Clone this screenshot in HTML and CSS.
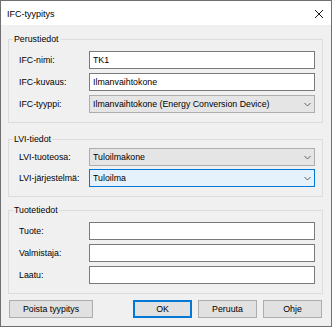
FILE: index.html
```html
<!DOCTYPE html>
<html lang="fi">
<head>
    <meta charset="UTF-8">
    <title>IFC-tyypitys</title>
    <link rel="stylesheet" href="styles.css">
</head>
<body>
    <div class="dialog">
        <div class="titlebar">
            <span class="title">IFC-tyypitys</span>
            <svg class="close" width="10" height="10" viewBox="0 0 10 10">
                <path d="M1 1 L9 9 M9 1 L1 9" stroke="#1a1a1a" stroke-width="1" fill="none"/>
            </svg>
        </div>

        <div class="content">
            <fieldset class="group">
                <legend>Perustiedot</legend>
                <div class="rows">
                    <span class="label">IFC-nimi:</span>
                    <div class="field">TK1</div>
                    <span class="label">IFC-kuvaus:</span>
                    <div class="field">Ilmanvaihtokone</div>
                    <span class="label">IFC-tyyppi:</span>
                    <div class="combo">
                        <span>Ilmanvaihtokone (Energy Conversion Device)</span>
                        <svg class="chevron" width="7" height="5" viewBox="0 0 7 5"><path d="M0.5 1 L3.5 4 L6.5 1" stroke="#606060" fill="none"/></svg>
                    </div>
                </div>
            </fieldset>

            <fieldset class="group lvi">
                <legend>LVI-tiedot</legend>
                <div class="rows tight">
                    <span class="label">LVI-tuoteosa:</span>
                    <div class="combo">
                        <span>Tuloilmakone</span>
                        <svg class="chevron" width="7" height="5" viewBox="0 0 7 5"><path d="M0.5 1 L3.5 4 L6.5 1" stroke="#606060" fill="none"/></svg>
                    </div>
                    <span class="label">LVI-järjestelmä:</span>
                    <div class="combo focused">
                        <span>Tuloilma</span>
                        <svg class="chevron" width="7" height="5" viewBox="0 0 7 5"><path d="M0.5 1 L3.5 4 L6.5 1" stroke="#606060" fill="none"/></svg>
                    </div>
                </div>
            </fieldset>

            <fieldset class="group">
                <legend>Tuotetiedot</legend>
                <div class="rows">
                    <span class="label">Tuote:</span>
                    <div class="field"></div>
                    <span class="label">Valmistaja:</span>
                    <div class="field"></div>
                    <span class="label">Laatu:</span>
                    <div class="field"></div>
                </div>
            </fieldset>

            <div class="buttons">
                <button class="btn wide">Poista tyypitys</button>
                <span class="spacer"></span>
                <button class="btn default">OK</button>
                <button class="btn">Peruuta</button>
                <button class="btn">Ohje</button>
            </div>
        </div>
    </div>
</body>
</html>
```

FILE: styles.css
```css
* {
    box-sizing: border-box;
    margin: 0;
    padding: 0;
}

body {
    font-family: "Liberation Sans", Arial, sans-serif;
    font-size: 8.8px;
    color: #000;
    background: #fff;
}

.dialog {
    width: 332px;
    border: 1px solid #707070;
    background: #f0f0f0;
}

.titlebar {
    height: 24px;
    background: #fff;
    display: flex;
    align-items: center;
    justify-content: space-between;
    padding: 2px 7px 0 6px;
}

.title {
    font-size: 9px;
}

.close {
    display: block;
}

.content {
    display: flex;
    flex-direction: column;
    padding: 6px 8px 8px 7px;
}

.group {
    border: 1px solid #dcdcdc;
    min-width: 0;
    margin-bottom: 5px;
}

.group.lvi {
    margin-top: 3px;
}

.group legend {
    margin-left: 4px;
    padding: 0 1px;
    line-height: 16px;
}

.rows {
    display: grid;
    grid-template-columns: 70px 226px;
    row-gap: 4px;
    align-items: center;
    padding: 4px 7px 9px 10px;
}

.rows.tight {
    row-gap: 3px;
    padding-top: 1px;
}

.field,
.combo {
    height: 18px;
    line-height: 16px;
    padding: 0 3px;
    white-space: nowrap;
}

.field {
    background: #fff;
    border: 1px solid #7a7a7a;
}

.combo {
    display: flex;
    align-items: center;
    justify-content: space-between;
    background: #e5e5e5;
    border: 1px solid #adadad;
}

.combo.focused {
    background: #e5f1fb;
    border-color: #0078d7;
}

.chevron {
    display: block;
}

.buttons {
    display: flex;
    gap: 6px;
    margin-top: 1px;
    padding: 0 1px;
}

.spacer {
    flex: 1;
}

.btn {
    width: 59px;
    height: 18px;
    font: inherit;
    color: #000;
    background: #e1e1e1;
    border: 1px solid #adadad;
}

.btn.wide {
    width: 84px;
}

.btn.default {
    border-color: #0078d7;
    box-shadow: inset 0 0 0 1px #0078d7;
}
```
